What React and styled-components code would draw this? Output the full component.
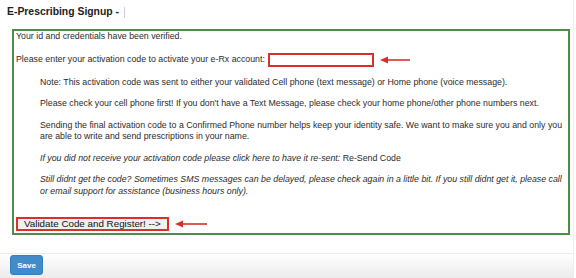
import styled, { createGlobalStyle } from "styled-components";

const GlobalStyle = createGlobalStyle`
    html, body {
        margin: 0;
        padding: 0;
        background: #fff;
    }
    body {
        font-family: "Liberation Sans", Arial, sans-serif;
        font-size: 8.8px;
        line-height: 11.5px;
        color: #2b2b2b;
    }
`;

const Page = styled.div`
    width: 574px;
    height: 278px;
    display: flex;
    flex-direction: column;
    border-right: 1px solid #eeeeee;
    box-sizing: border-box;
`;

const Header = styled.div`
    display: flex;
    align-items: center;
    height: 24px;
    padding: 0 7px;
`;

const Title = styled.h1`
    margin: 0;
    font-size: 10.4px;
    font-weight: bold;
    color: #222;
`;

const Caret = styled.span`
    display: inline-block;
    width: 1px;
    height: 11px;
    margin-left: 5px;
    background: #cfcfcf;
`;

const Panel = styled.div`
    margin: 5px 0 0 12px;
    width: 558px;
    height: 206px;
    box-sizing: border-box;
    border: 2px solid #4e8c4e;
    padding: 0 0 0 2px;
    display: flex;
    flex-direction: column;
`;

const Line = styled.p`
    margin: 0;
`;

const CodeRow = styled.div`
    display: flex;
    align-items: center;
    height: 14px;
    margin-top: 10px;
`;

const CodeInput = styled.input`
    width: 106px;
    height: 14px;
    box-sizing: border-box;
    margin: 0 0 0 3px;
    padding: 0 3px;
    border: 2px solid #d8312b;
    background: #fff;
    outline: none;
`;

const Notes = styled.div`
    margin-left: 24px;
    margin-top: 10px;
`;

const Note = styled.p`
    margin: 0 0 10px;
    font-style: ${(props) => (props.italic ? "italic" : "normal")};
`;

const Plain = styled.span`
    font-style: normal;
`;

const ActionRow = styled.div`
    display: flex;
    align-items: center;
    margin-top: 10px;
`;

const ValidateButton = styled.button`
    height: 14px;
    padding: 0 6px;
    box-sizing: border-box;
    border: 2px solid #d8312b;
    background: #f0f0f0;
    font-family: "Liberation Sans", Arial, sans-serif;
    font-size: 9.8px;
    line-height: 10px;
    color: #111;
    cursor: pointer;
`;

const Footer = styled.div`
    margin-top: auto;
    height: 25px;
    box-sizing: border-box;
    border-top: 1px solid #ebebeb;
    padding: 1px 10px 0;
    background: linear-gradient(180deg, #ffffff 0%, #ebebeb 100%);
`;

const SaveButton = styled.button`
    width: 33px;
    height: 20px;
    padding: 0;
    border: 1px solid #357ebd;
    border-radius: 3px;
    background: #428bca;
    color: #fff;
    font-family: "Liberation Sans", Arial, sans-serif;
    font-size: 8px;
    font-weight: bold;
    cursor: pointer;
`;

function Arrow({ width }) {
    return (
        <svg width={width} height="8" viewBox={`0 0 ${width} 8`} style={{ marginLeft: 6 }}>
            <line x1="6" y1="4" x2={width} y2="4" stroke="#d8312b" strokeWidth="1.6" />
            <polygon points="0,4 8,0.5 8,7.5" fill="#d8312b" />
        </svg>
    );
}

function App() {
    return (
        <>
            <GlobalStyle />
            <Page>
                <Header>
                    <Title>E-Prescribing Signup -</Title>
                    <Caret />
                </Header>
                <Panel>
                    <Line>Your id and credentials have been verified.</Line>
                    <CodeRow>
                        Please enter your activation code to activate your e-Rx account:
                        <CodeInput type="text" />
                        <Arrow width={30} />
                    </CodeRow>
                    <Notes>
                        <Note>
                            Note: This activation code was sent to either your validated Cell phone
                            (text message) or Home phone (voice message).
                        </Note>
                        <Note>
                            Please check your cell phone first! If you don't have a Text Message,
                            please check your home phone/other phone numbers next.
                        </Note>
                        <Note>
                            Sending the final activation code to a Confirmed Phone number helps keep
                            your identity safe. We want to make sure you and only you are able to
                            write and send prescriptions in your name.
                        </Note>
                        <Note italic>
                            If you did not receive your activation code please click here to have it
                            re-sent: <Plain>Re-Send Code</Plain>
                        </Note>
                        <Note italic>
                            Still didnt get the code? Sometimes SMS messages can be delayed, please
                            check again in a little bit. If you still didnt get it, please call or
                            email support for assistance (business hours only).
                        </Note>
                    </Notes>
                    <ActionRow>
                        <ValidateButton type="button">Validate Code and Register! --&gt;</ValidateButton>
                        <Arrow width={32} />
                    </ActionRow>
                </Panel>
                <Footer>
                    <SaveButton type="button">Save</SaveButton>
                </Footer>
            </Page>
        </>
    );
}

export default App;
